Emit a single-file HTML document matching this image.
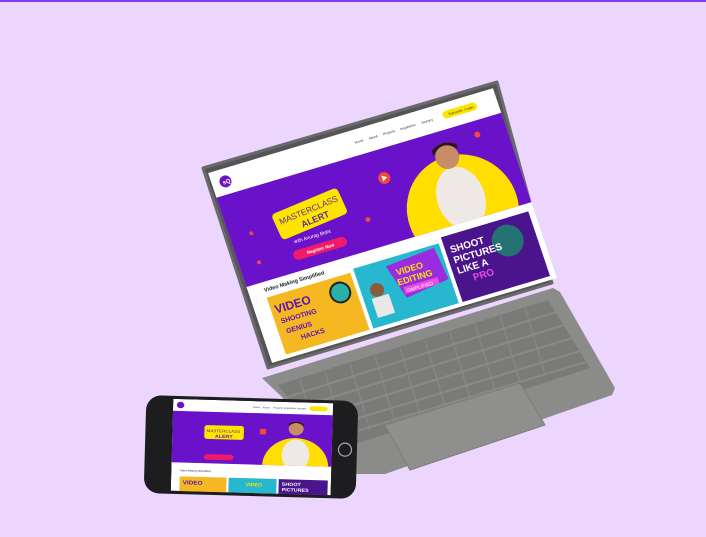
<!DOCTYPE html>
<html><head><meta charset="utf-8"><style>
html,body{margin:0;padding:0}
body{width:706px;height:537px;overflow:hidden;background:#ecd6fd;border-top:2px solid #7b3ff0;box-sizing:border-box;font-family:"Liberation Sans",sans-serif}
svg{position:absolute;left:0;top:0}
</style></head><body>
<svg width="706" height="537" viewBox="0 0 706 537">
<defs>
<clipPath id="scr"><rect x="0" y="0" width="300" height="200"/></clipPath>
<clipPath id="pscr"><rect x="0" y="0" width="300" height="200"/></clipPath>
<clipPath id="hero"><rect x="0" y="26" width="300" height="94"/></clipPath>
<clipPath id="phero"><rect x="0" y="26" width="300" height="112"/></clipPath>
</defs>
<polygon points="262,378 553,288 560,292 615,388 612,395 385,474 335,474 285,400" fill="#8b8b89"/>
<polygon points="278,385 548,300 590,368 330,452" fill="#7a7a79"/>
<g stroke="#8b8b89" stroke-width="2.2" opacity="0.9">
<line x1="284" y1="398" x2="556" y2="312"/>
<line x1="291" y1="410" x2="564" y2="325"/>
<line x1="298" y1="422" x2="572" y2="338"/>
<line x1="306" y1="434" x2="580" y2="351"/>
<line x1="314" y1="444" x2="586" y2="362"/>
</g>
<g stroke="#8b8b89" stroke-width="1.6" opacity="0.7">
<line x1="300" y1="380" x2="320" y2="445"/><line x1="325" y1="372" x2="345" y2="438"/>
<line x1="350" y1="364" x2="370" y2="430"/><line x1="375" y1="356" x2="395" y2="422"/>
<line x1="400" y1="348" x2="420" y2="414"/><line x1="425" y1="340" x2="445" y2="406"/>
<line x1="450" y1="332" x2="470" y2="398"/><line x1="475" y1="324" x2="495" y2="390"/>
<line x1="500" y1="316" x2="520" y2="382"/><line x1="525" y1="308" x2="545" y2="374"/>
</g>
<polygon points="385,425 520,383 545,425 410,470" fill="#8f8f8d" stroke="#7d7d7b" stroke-width="1"/>
<polygon points="203,168 497,82 552,283 268,368" fill="#555557" stroke="#6a6a6c" stroke-width="3" stroke-linejoin="round"/>
<g transform="matrix(0.95,-0.283,0.32,0.95,208,173)">
<g clip-path="url(#scr)">
<rect width="300" height="200" fill="#fff"/>
<rect x="0" y="26" width="300" height="94" fill="#6a12c9"/>
<circle cx="14" cy="13" r="6" fill="#6a12c9"/>
<text x="11" y="15.5" font-size="6" fill="#fff" font-weight="bold">sQ</text>
<g font-size="3.5" fill="#333"><text x="150" y="14">Home</text><text x="165" y="14">About</text><text x="180" y="14">Projects</text><text x="198" y="14">Inspiration</text><text x="220" y="14">Journey</text></g>
<rect x="243" y="8" width="36" height="8" rx="4" fill="#ffe400"/>
<text x="249" y="13.5" font-size="3.4" fill="#333">Subscribe / Login</text>
<g clip-path="url(#hero)">
<circle cx="232" cy="108" r="56" fill="#ffde00"/>
<ellipse cx="234" cy="96" rx="24" ry="32" fill="#efe9e6"/>
<circle cx="234" cy="53" r="12" fill="#c98c66"/>
<path d="M221 48 q13 -14 26 0 l0 -5 q-13 -9 -26 0z" fill="#2a1a12"/>
</g>
<circle cx="167" cy="55" r="6" fill="#f04a3a"/>
<polygon points="165,52 170,55 165,58" fill="#fff"/>
<circle cx="270" cy="40" r="3" fill="#f04a3a"/>
<rect x="48" y="54" width="72" height="28" rx="4" fill="#ffe400" transform="rotate(-6 85 68)"/>
<text x="53" y="67" font-size="8.5" fill="#5a2c9a" transform="rotate(-6 85 68)">MASTERCLASS</text>
<text x="72" y="78" font-size="9" font-weight="bold" fill="#5a2c9a" transform="rotate(-6 85 68)">ALERT</text>
<text x="60" y="92" font-size="5" fill="#fff">with Anurag Bisht</text>
<rect x="55" y="99" width="56" height="10" rx="5" fill="#f01a6a"/>
<text x="69" y="106" font-size="4.5" fill="#fff" font-weight="bold">Register Now</text>
<circle cx="22" cy="70" r="2" fill="#f04a3a"/><circle cx="20" cy="100" r="2" fill="#f04a3a"/><circle cx="138" cy="90" r="2.5" fill="#f04a3a"/>
<text x="16" y="130" font-size="5.5" font-weight="bold" fill="#222">Video Making Simplified</text>
<rect x="16" y="136" width="88" height="60" fill="#f5b820"/>
<text x="20" y="154" font-size="12" font-weight="bold" fill="#5a12b8">VIDEO</text>
<text x="22" y="165" font-size="7" font-weight="bold" fill="#5a12b8">SHOOTING</text>
<text x="24" y="176" font-size="7" font-weight="bold" fill="#5a12b8">GENIUS</text>
<text x="36" y="186" font-size="7" font-weight="bold" fill="#5a12b8">HACKS</text>
<circle cx="88" cy="152" r="10" fill="#2ab0a8" stroke="#222" stroke-width="2"/>
<rect x="108" y="133" width="90" height="63" fill="#27b7cf"/>
<polygon points="140,140 192,136 196,170 150,176" fill="#9b2be0"/>
<text x="148" y="152" font-size="9" font-weight="bold" fill="#ffe400">VIDEO</text>
<text x="146" y="162" font-size="9" font-weight="bold" fill="#ffe400">EDITING</text>
<rect x="150" y="165" width="36" height="7" fill="#e94ae0"/>
<text x="152" y="171" font-size="5" fill="#fff">SIMPLIFIED</text>
<circle cx="124" cy="160" r="7" fill="#8a5a3a"/><rect x="116" y="167" width="18" height="20" fill="#e8e8e8"/>
<rect x="202" y="128" width="92" height="68" fill="#4a148c"/>
<circle cx="265" cy="150" r="16" fill="#1a8a6a" opacity="0.8"/>
<text x="207" y="146" font-size="10" font-weight="bold" fill="#fff">SHOOT</text>
<text x="207" y="157" font-size="10" font-weight="bold" fill="#fff">PICTURES</text>
<text x="207" y="168" font-size="10" font-weight="bold" fill="#fff">LIKE A</text>
<text x="220" y="179" font-size="10" font-weight="bold" fill="#e94ae0">PRO</text>
</g></g>
<g transform="rotate(1.6 250 447)">
<rect x="145" y="398" width="212" height="98" rx="15" fill="#1d1d1f"/>
<circle cx="345" cy="447" r="6.5" fill="#1d1d1f" stroke="#aaa" stroke-width="1.2"/>
<g transform="translate(172,401) scale(0.533,0.46)">
<g clip-path="url(#pscr)">
<rect width="300" height="200" fill="#fff"/>
<rect x="0" y="26" width="300" height="112" fill="#6a12c9"/>
<circle cx="14" cy="13" r="7" fill="#6a12c9"/>
<g font-size="5" fill="#333"><text x="150" y="15">Home</text><text x="168" y="15">About</text><text x="188" y="15">Projects</text><text x="208" y="15">Inspiration</text><text x="232" y="15">Journey</text></g>
<rect x="256" y="8" width="34" height="10" rx="5" fill="#ffe400"/>
<g clip-path="url(#phero)">
<circle cx="232" cy="140" r="62" fill="#ffde00"/>
<ellipse cx="232" cy="115" rx="26" ry="34" fill="#efe9e6"/>
<circle cx="232" cy="58" r="14" fill="#c98c66"/>
<path d="M218 52 q14 -14 28 0 l0 -5 q-14 -9 -28 0z" fill="#2a1a12"/>
</g>
<rect x="164" y="60" width="12" height="12" rx="2" fill="#f04a3a"/>
<rect x="60" y="55" width="74" height="30" rx="5" fill="#ffe400"/>
<text x="64" y="70" font-size="8.5" fill="#5a2c9a">MASTERCLASS</text>
<text x="80" y="82" font-size="10" font-weight="bold" fill="#5a2c9a">ALERT</text>
<rect x="60" y="118" width="56" height="12" rx="6" fill="#f01a6a"/>
<text x="16" y="157" font-size="5.5" fill="#222">Video Making Simplified</text>
<rect x="16" y="168" width="88" height="40" fill="#f5b820"/>
<text x="22" y="185" font-size="12" font-weight="bold" fill="#5a12b8">VIDEO</text>
<rect x="108" y="168" width="90" height="40" fill="#27b7cf"/>
<text x="140" y="185" font-size="10" font-weight="bold" fill="#ffe400">VIDEO</text>
<rect x="202" y="168" width="92" height="40" fill="#4a148c"/>
<text x="208" y="182" font-size="10" font-weight="bold" fill="#fff">SHOOT</text>
<text x="208" y="194" font-size="10" font-weight="bold" fill="#fff">PICTURES</text>
</g></g>
</g>
</svg>
</body></html>
